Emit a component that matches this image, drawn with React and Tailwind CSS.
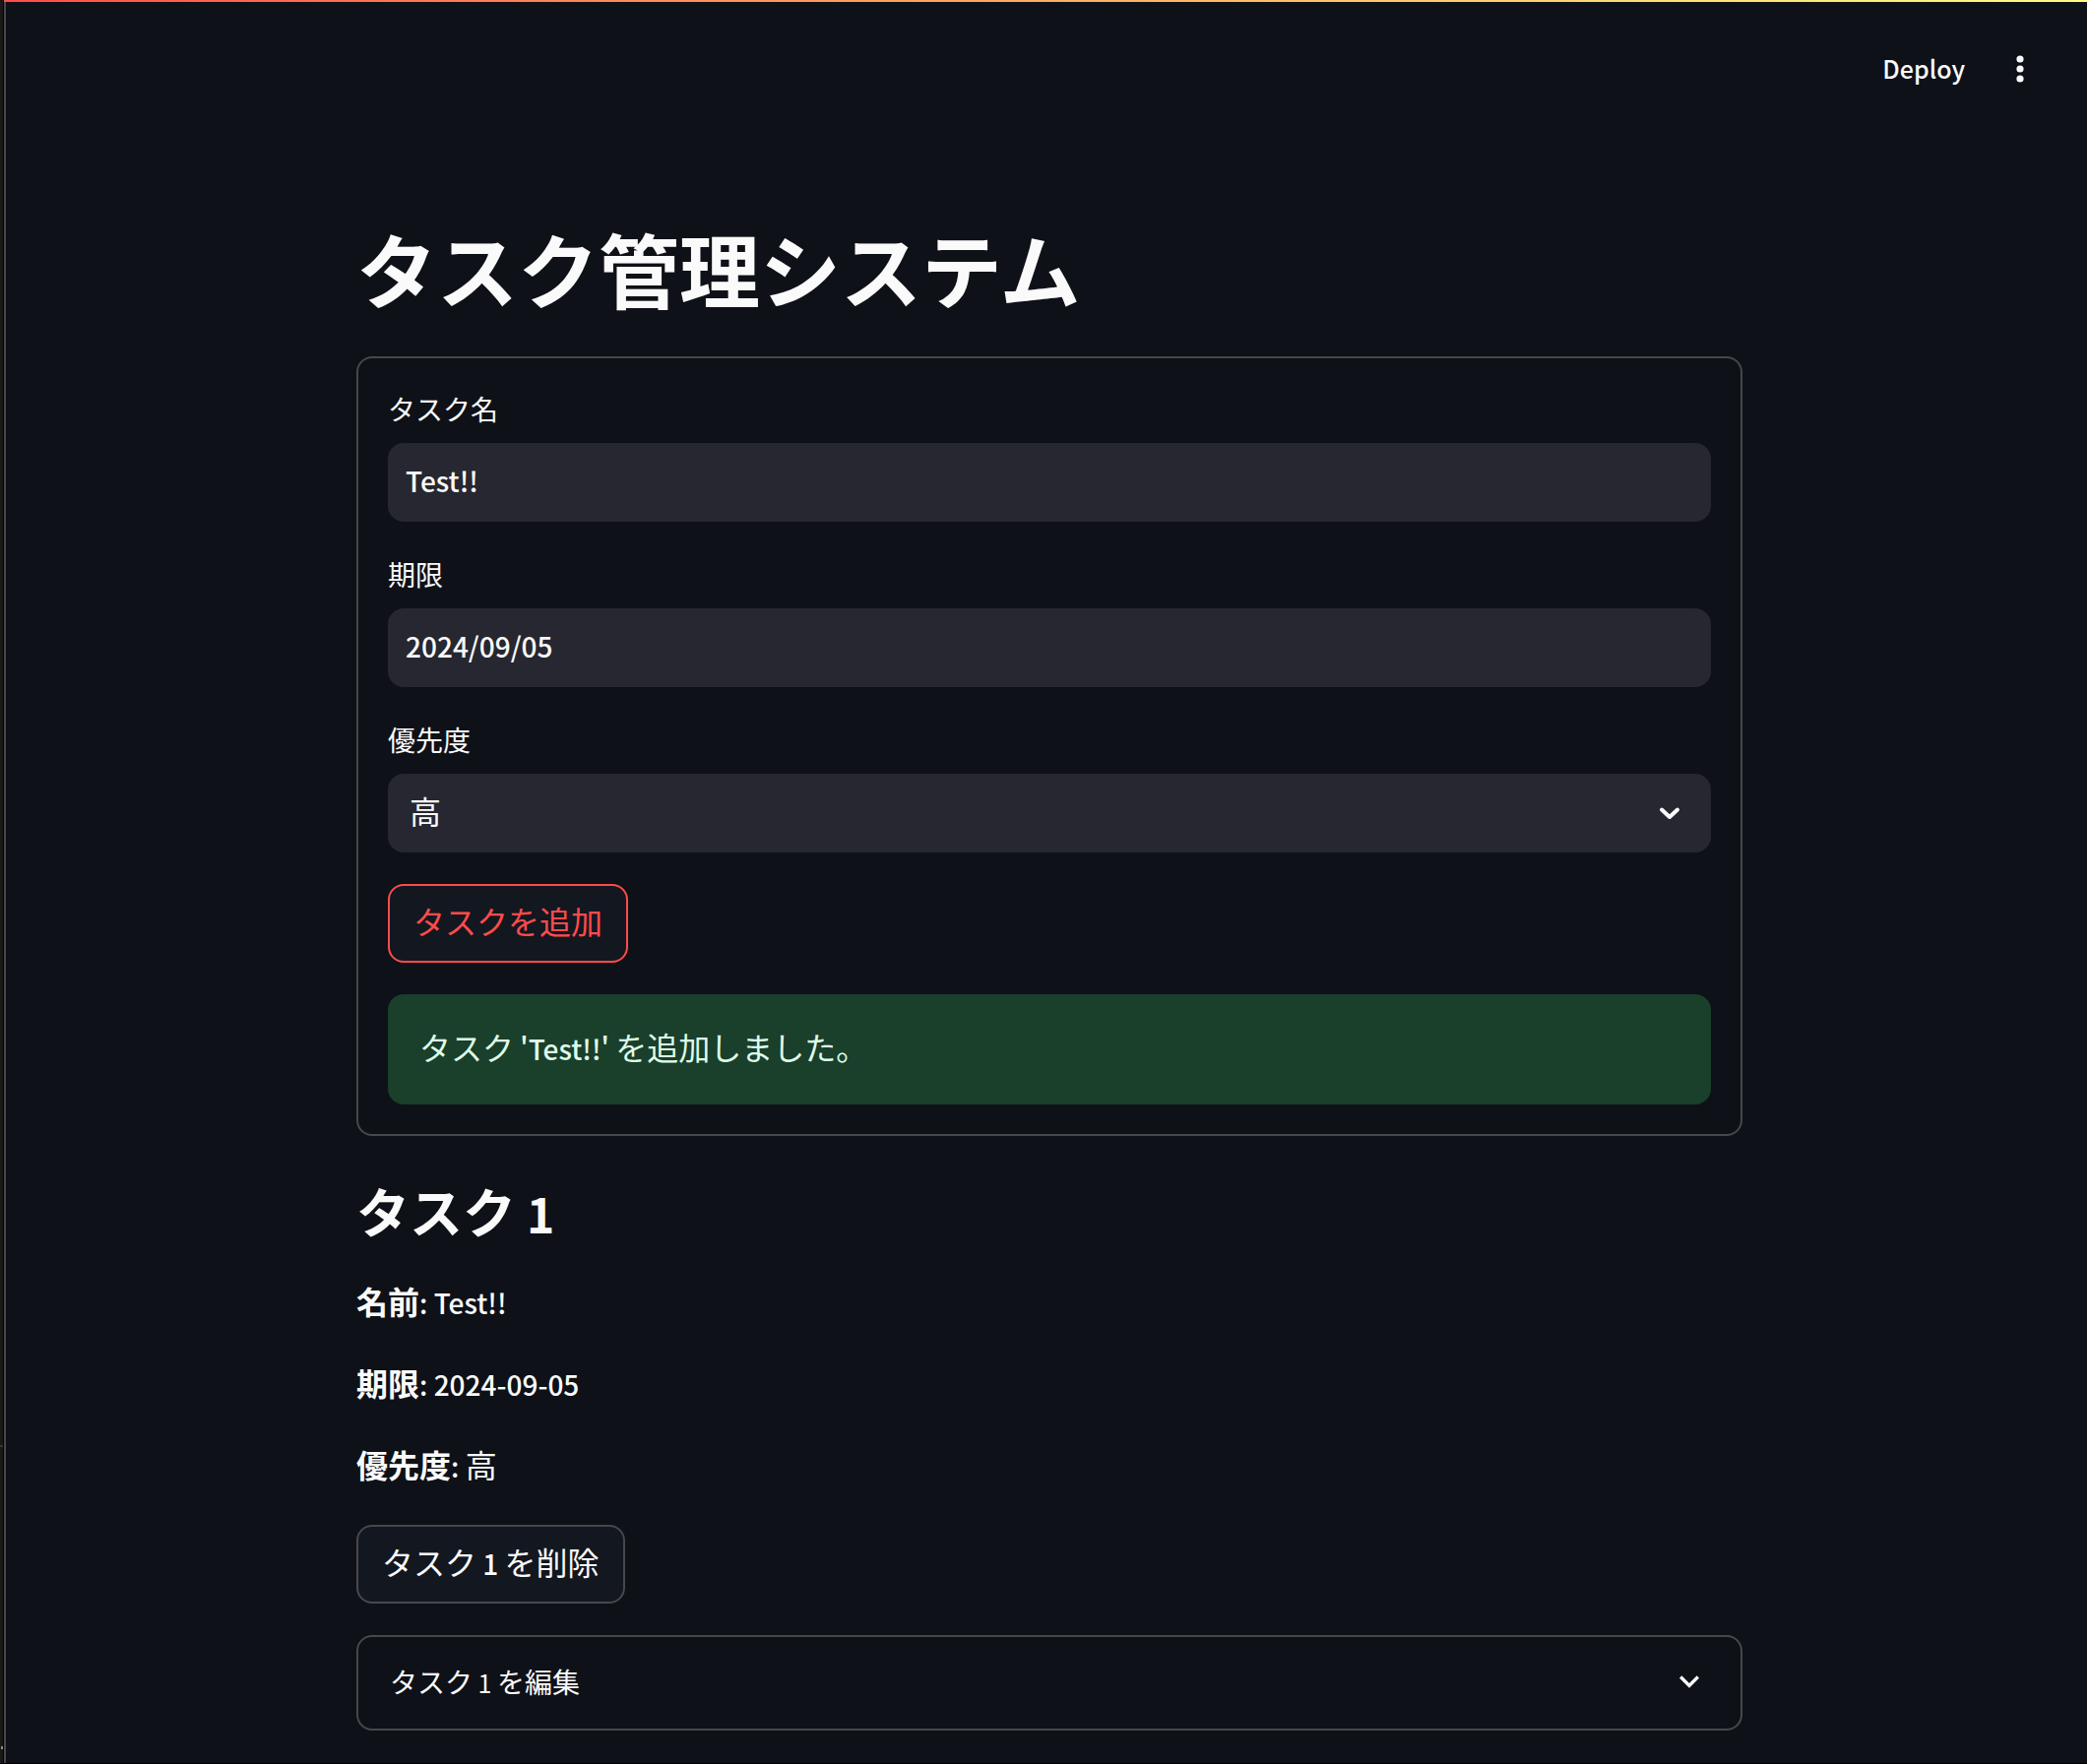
import React, { useState } from "react";

const latin = "text-[28px] leading-none font-medium";

function Chevron({ rounded }) {
  return rounded ? (
    <svg viewBox="0 0 32 32" className="h-8 w-8" aria-hidden="true">
      <path d="M8 12.5 L16 20 L24 12.5" fill="none" stroke="#fafafa" strokeWidth="4" strokeLinecap="round" strokeLinejoin="round" />
    </svg>
  ) : (
    <svg viewBox="0 0 24 24" className="h-10 w-10" fill="#fafafa" aria-hidden="true">
      <path d="M7.41 8.59 12 13.17l4.59-4.58L18 10l-6 6-6-6 1.41-1.41z" />
    </svg>
  );
}

function Field({ id, label, children }) {
  return (
    <div className="flex flex-col">
      <label htmlFor={id} className="mb-3 h-11 text-[28px] leading-[42px]">
        {label}
      </label>
      {children}
    </div>
  );
}

function Detail({ name, children }) {
  return (
    <p className="text-[32px] leading-[51px]">
      <strong className="font-bold">{name}</strong>
      {children}
    </p>
  );
}

export default function App() {
  const [name, setName] = useState("Test!!");
  const [due, setDue] = useState("2024/09/05");
  const [priority, setPriority] = useState("高");

  return (
    <div
      lang="ja"
      className="flex min-h-screen border-b border-black bg-[#0e1117] font-['Noto_Sans_CJK_JP','Noto_Sans',sans-serif] text-[#fafafa]"
    >
      <div className="flex w-1 shrink-0 flex-col border-r border-black bg-[#1b1917]">
        <div className="grow-[82]" />
        <div className="h-0.5 bg-[#383736]" />
        <div className="grow-[17]" />
        <div className="h-[3px] w-0.5 self-end bg-[#8a8988]" />
        <div className="h-3.5" />
      </div>
      <div className="flex min-w-0 grow flex-col">
        <div className="h-0.5 bg-linear-to-r from-[#ff4b4b] to-[#fffd80]" />
        <div className="grow border-l-2 border-[#47484c]">
          <header className="flex h-[136px] items-center justify-end gap-11 pr-14">
            <button type="button" className="pb-0.5 text-[25px] leading-10 font-medium">Deploy</button>
            <button type="button" aria-label="メニュー">
              <svg viewBox="0 0 24 32" className="h-8 w-6" fill="#fafafa" aria-hidden="true">
                <circle cx="12" cy="6" r="3.6" />
                <circle cx="12" cy="16" r="3.6" />
                <circle cx="12" cy="26" r="3.6" />
              </svg>
            </button>
          </header>

          <main className="pl-1.5">
            <div className="mx-auto max-w-[1408px] pt-20">
              <h1 className="mb-9 text-[82px] leading-[108px] font-bold">タスク管理システム</h1>

              <form
                className="flex flex-col gap-8 rounded-2xl border-2 border-[#47484c] p-[30px]"
                onSubmit={(e) => e.preventDefault()}
              >
                <Field id="task-name" label="タスク名">
                  <input
                    id="task-name"
                    type="text"
                    value={name}
                    onChange={(e) => setName(e.target.value)}
                    className="h-20 w-full rounded-2xl bg-[#262730] px-[18px] pb-1 text-[28px] font-medium"
                  />
                </Field>
                <Field id="task-due" label="期限">
                  <input
                    id="task-due"
                    type="text"
                    value={due}
                    onChange={(e) => setDue(e.target.value)}
                    className="h-20 w-full rounded-2xl bg-[#262730] px-[18px] pb-1 text-[28px] font-medium"
                  />
                </Field>
                <Field id="task-priority" label="優先度">
                  <div className="relative">
                    <select
                      id="task-priority"
                      value={priority}
                      onChange={(e) => setPriority(e.target.value)}
                      className="h-20 w-full appearance-none rounded-2xl bg-[#262730] px-[22px] pb-1.5 text-[32px]"
                    >
                      <option>高</option>
                      <option>中</option>
                      <option>低</option>
                    </select>
                    <div className="pointer-events-none absolute inset-y-0 right-[26px] flex items-center">
                      <Chevron rounded />
                    </div>
                  </div>
                </Field>
                <button
                  type="submit"
                  className="h-20 self-start rounded-2xl border-2 border-[#ff4b4b] bg-[#131720] px-6 pb-1.5 text-[32px] text-[#ff4b4b]"
                >
                  タスクを追加
                </button>
                <div role="status" className="flex h-28 items-center rounded-2xl bg-[#1a3f2b] px-8 pb-1.5 text-[32px] text-[#dffde9]">
                  <p>
                    タスク<span className={latin}> 'Test!!' </span>を追加しました。
                  </p>
                </div>
              </form>

              <h2 className="mt-[42px] mb-8 text-[54px] leading-[68px] font-bold">
                タスク<span className="text-[48px] leading-none"> 1</span>
              </h2>
              <div className="flex flex-col gap-8">
                <Detail name="名前">
                  <span className={latin}>: Test!!</span>
                </Detail>
                <Detail name="期限">
                  <span className={latin}>: 2024-09-05</span>
                </Detail>
                <Detail name="優先度">
                  <span className={latin}>: </span>高
                </Detail>
                <button
                  type="button"
                  className="mt-1 h-20 self-start rounded-2xl border-2 border-[#47484c] bg-[#131720] px-6 pb-1.5 text-[32px]"
                >
                  タスク<span className={latin}> 1 </span>を削除
                </button>
                <details className="rounded-2xl border-2 border-[#47484c]">
                  <summary className="flex h-[93px] list-none items-center justify-between px-8 pb-1 text-[28px]">
                    <span>
                      タスク<span className="text-[25px] leading-none"> 1 </span>を編集
                    </span>
                    <Chevron />
                  </summary>
                </details>
              </div>
            </div>
          </main>
        </div>
      </div>
    </div>
  );
}
